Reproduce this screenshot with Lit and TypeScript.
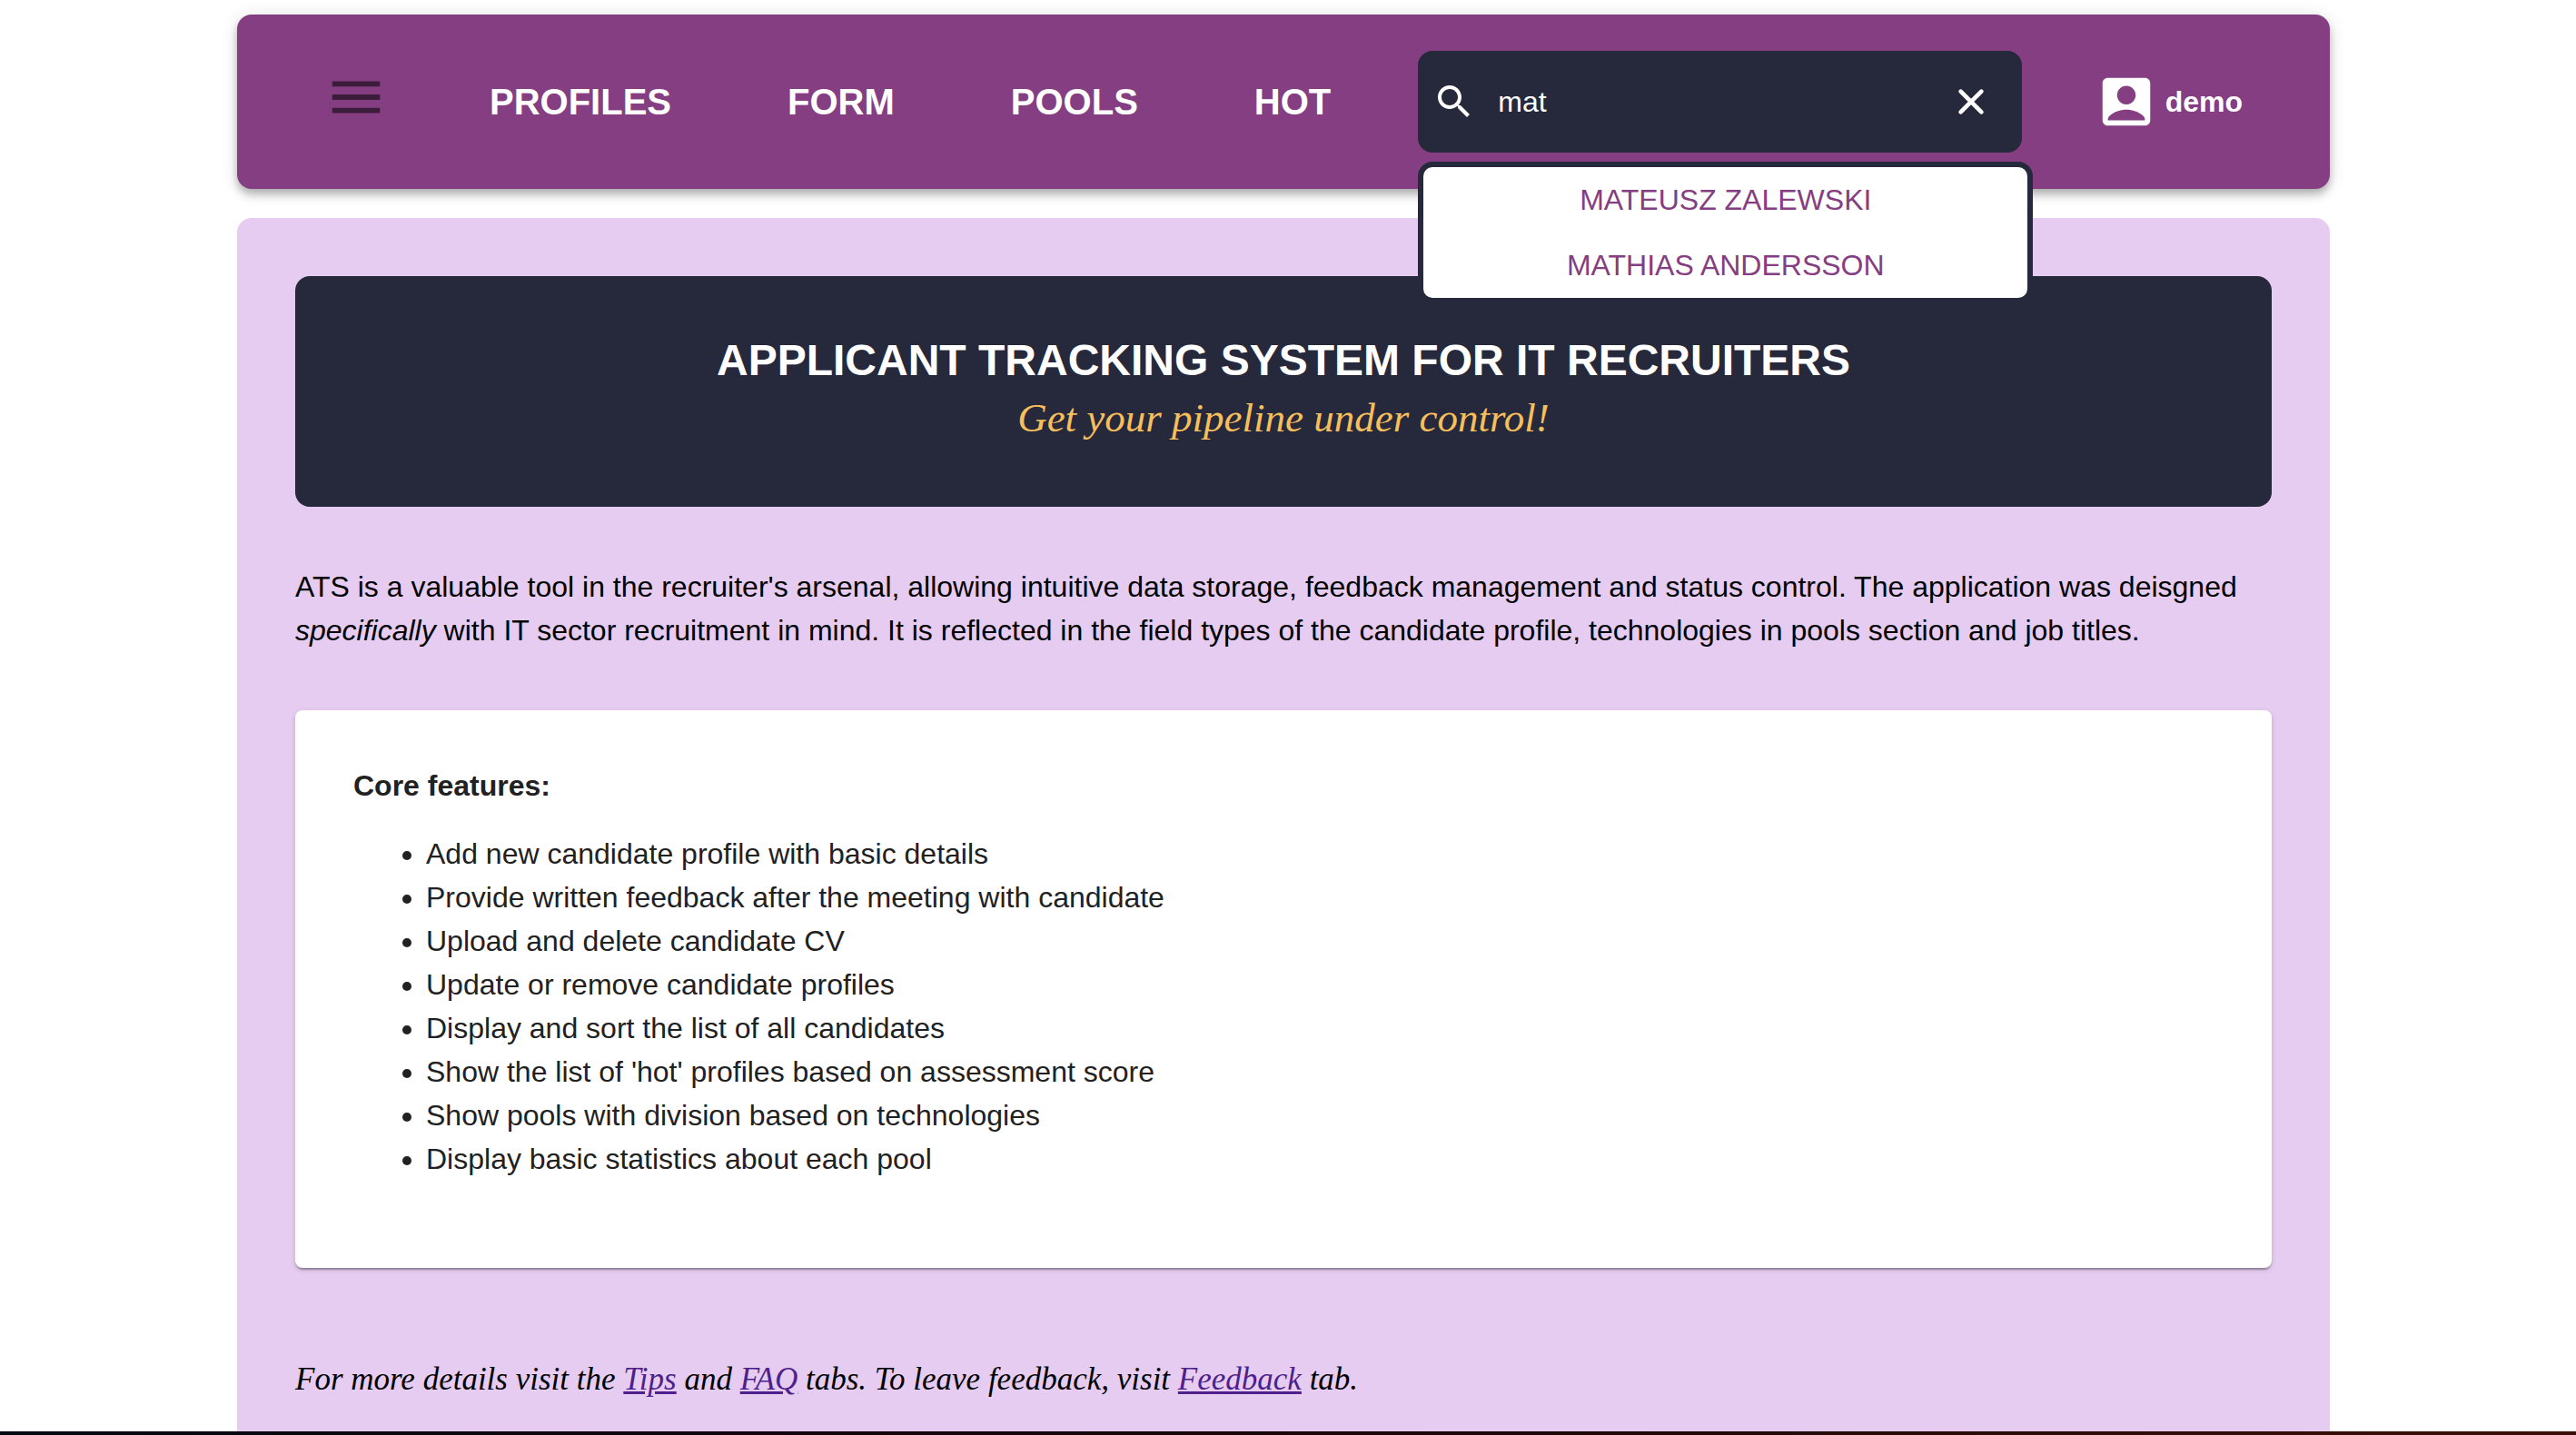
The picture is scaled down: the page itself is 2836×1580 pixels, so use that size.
import { LitElement, html, css } from "lit";
import { customElement, state } from "lit/decorators.js";

const NAV_LINKS = ["PROFILES", "FORM", "POOLS", "HOT"];

const CANDIDATES = ["MATEUSZ ZALEWSKI", "MATHIAS ANDERSSON"];

const FEATURES = [
  "Add new candidate profile with basic details",
  "Provide written feedback after the meeting with candidate",
  "Upload and delete candidate CV",
  "Update or remove candidate profiles",
  "Display and sort the list of all candidates",
  "Show the list of 'hot' profiles based on assessment score",
  "Show pools with division based on technologies",
  "Display basic statistics about each pool",
];

@customElement("candidate-search")
export class CandidateSearch extends LitElement {
  static styles = css`
    :host {
      display: block;
      position: relative;
    }
    .field {
      box-sizing: border-box;
      display: flex;
      align-items: center;
      height: 112px;
      padding: 0 32px 0 16px;
      border-radius: 16px;
      background: #26293b;
      color: #fff;
    }
    .icon {
      display: block;
      width: 48px;
      height: 48px;
      fill: currentColor;
    }
    .cross {
      fill: none;
      stroke: currentColor;
      stroke-width: 2.3;
      stroke-linecap: round;
    }
    .label {
      flex: none;
    }
    .input {
      flex: 1;
      min-width: 0;
      margin: 0 24px;
      padding: 0;
      border: 0;
      outline: 0;
      background: none;
      color: inherit;
      font: 32px/48px "Liberation Sans", Arial, sans-serif;
    }
    .clear {
      flex: none;
      padding: 0;
      border: 0;
      background: none;
      color: inherit;
      cursor: pointer;
    }
    .results {
      position: absolute;
      z-index: 2;
      top: 122px;
      left: 0;
      width: 100%;
      margin: 0;
      padding: 0;
      border: 6px solid #26293b;
      border-radius: 16px;
      background: #fff;
      list-style: none;
      text-align: center;
    }
    .result {
      display: block;
      color: #843e81;
      font-size: 32px;
      line-height: 72px;
      text-decoration: none;
    }
  `;

  @state() private query = "mat";

  private onInput(e: Event) {
    this.query = (e.target as HTMLInputElement).value;
  }

  private clear() {
    this.query = "";
  }

  render() {
    const term = this.query.trim().toUpperCase();
    const matches = term ? CANDIDATES.filter((n) => n.includes(term)) : [];
    return html`
      <div class="field">
        <label class="label" for="query" aria-label="Search candidates">
          <svg class="icon" viewBox="0 0 24 24" aria-hidden="true">
            <path
              d="M15.5 14h-.79l-.28-.27C15.41 12.59 16 11.11 16 9.5 16 5.91 13.09 3 9.5 3S3 5.91 3 9.5 5.91 16 9.5 16c1.61 0 3.09-.59 4.23-1.57l.27.28v.79l5 4.99L20.49 19l-4.99-5zm-6 0C7.01 14 5 11.99 5 9.5S7.01 5 9.5 5 14 7.01 14 9.5 11.99 14 9.5 14z"
            />
          </svg>
        </label>
        <input id="query" class="input" type="text" autocomplete="off" .value=${this.query} @input=${this.onInput} />
        <button class="clear" type="button" aria-label="Clear search" @click=${this.clear}>
          <svg class="icon" viewBox="0 0 24 24" aria-hidden="true">
            <path class="cross" d="M6.3 6.3L17.7 17.7M17.7 6.3L6.3 17.7" />
          </svg>
        </button>
      </div>
      ${matches.length
        ? html`<ul class="results">
            ${matches.map((name) => html`<li><a class="result" href="#profile">${name}</a></li>`)}
          </ul>`
        : null}
    `;
  }
}

@customElement("app-root")
export class AppRoot extends LitElement {
  static styles = css`
    :host {
      box-sizing: border-box;
      display: flex;
      flex-direction: column;
      height: 100vh;
      overflow: hidden;
      background: #fff;
      color: #000;
      font-family: "Liberation Sans", Arial, sans-serif;
      font-size: 32px;
      line-height: 48px;
    }
    .viewport {
      flex: 1;
      min-height: 0;
      overflow: hidden;
      padding: 16px 10px 0 0;
    }
    .page {
      display: flex;
      flex-direction: column;
      gap: 32px;
      max-width: 2304px;
      min-height: 100%;
      margin: 0 auto;
    }
    .edge {
      flex: none;
      height: 4px;
      background: linear-gradient(90deg, #000812, #12040c 30%, #1c0808 60%, #3c1009);
    }
    .header {
      box-sizing: border-box;
      position: relative;
      z-index: 1;
      display: flex;
      align-items: center;
      min-height: 192px;
      padding: 0 96px;
      border-radius: 16px;
      background: #843e81;
      color: #fff;
      box-shadow:
        0 4px 8px -2px rgba(0, 0, 0, 0.2),
        0 8px 10px 0 rgba(0, 0, 0, 0.14),
        0 2px 20px 0 rgba(0, 0, 0, 0.12);
    }
    .menu {
      flex: none;
      padding: 0 0 10px;
      border: 0;
      background: none;
      color: rgba(0, 0, 0, 0.54);
      cursor: pointer;
    }
    .icon {
      display: block;
      width: 70px;
      height: 70px;
      fill: currentColor;
    }
    .nav {
      display: flex;
      gap: 128px;
      margin: 0 96px 0 112px;
    }
    .nav-link {
      color: inherit;
      font-size: 40px;
      font-weight: 700;
      text-decoration: none;
    }
    .search {
      flex: 0 1 665px;
    }
    .user {
      display: flex;
      align-items: center;
      gap: 8px;
      margin-left: auto;
      color: inherit;
      font-weight: 700;
      text-decoration: none;
    }
    .main {
      flex: 1;
      padding: 64px;
      border-radius: 16px 16px 0 0;
      background: #e6ccf0;
    }
    .hero {
      padding: 64px;
      border-radius: 16px;
      background: #26293b;
      text-align: center;
    }
    .title {
      margin: 0;
      color: #fff;
      font-size: 48px;
      line-height: 58px;
    }
    .tagline {
      margin: 0;
      color: #f7bf5c;
      font: italic 45px/68px "Liberation Serif", "Times New Roman", serif;
    }
    .intro {
      margin: 64px 0;
    }
    .card {
      padding: 64px;
      border-radius: 8px;
      background: #fff;
      color: #212121;
      box-shadow:
        0 4px 2px -2px rgba(0, 0, 0, 0.2),
        0 2px 2px 0 rgba(0, 0, 0, 0.14),
        0 2px 6px 0 rgba(0, 0, 0, 0.12);
    }
    .card-title {
      margin: 0;
      font-size: 32px;
      line-height: 38px;
    }
    .features {
      margin: 32px 0;
      padding-left: 80px;
    }
    .more {
      margin: 96px 0 0;
      font: italic 35px/54px "Liberation Serif", "Times New Roman", serif;
    }
    .link {
      color: #4f1f8c;
    }
  `;

  render() {
    return html`
      <div class="viewport">
        <div class="page">
          <header class="header">
            <button class="menu" type="button" aria-label="Open menu">
              <svg class="icon" viewBox="0 0 24 24" aria-hidden="true">
                <path d="M3 18h18v-2H3v2zm0-5h18v-2H3v2zm0-7v2h18V6H3z" />
              </svg>
            </button>
            <nav class="nav">
              ${NAV_LINKS.map((name) => html`<a class="nav-link" href="#${name.toLowerCase()}">${name}</a>`)}
            </nav>
            <candidate-search class="search"></candidate-search>
            <a class="user" href="#account">
              <svg class="icon" viewBox="0 0 24 24" aria-hidden="true">
                <path
                  d="M19 3H5c-1.11 0-2 .9-2 2v14c0 1.1.89 2 2 2h14c1.1 0 2-.9 2-2V5c0-1.1-.9-2-2-2zm-7 3c1.93 0 3.5 1.57 3.5 3.5S13.93 13 12 13s-3.5-1.57-3.5-3.5S10.07 6 12 6zm7 13H5v-.23c0-.62.28-1.2.76-1.58C7.47 15.82 9.64 15 12 15s4.53.82 6.24 2.19c.48.38.76.97.76 1.58V19z"
                />
              </svg>
              <span>demo</span>
            </a>
          </header>
          <main class="main">
            <section class="hero">
              <h1 class="title">APPLICANT TRACKING SYSTEM FOR IT RECRUITERS</h1>
              <p class="tagline">Get your pipeline under control!</p>
            </section>
            <p class="intro">
              ATS is a valuable tool in the recruiter's arsenal, allowing intuitive data storage, feedback management
              and status control. The application was deisgned <em>specifically</em> with IT sector recruitment in mind.
              It is reflected in the field types of the candidate profile, technologies in pools section and job titles.
            </p>
            <section class="card">
              <h2 class="card-title">Core features:</h2>
              <ul class="features">
                ${FEATURES.map((text) => html`<li>${text}</li>`)}
              </ul>
            </section>
            <p class="more">
              For more details visit the <a class="link" href="#tips">Tips</a> and
              <a class="link" href="#faq">FAQ</a> tabs. To leave feedback, visit
              <a class="link" href="#feedback">Feedback</a> tab.
            </p>
          </main>
        </div>
      </div>
      <div class="edge"></div>
    `;
  }
}
